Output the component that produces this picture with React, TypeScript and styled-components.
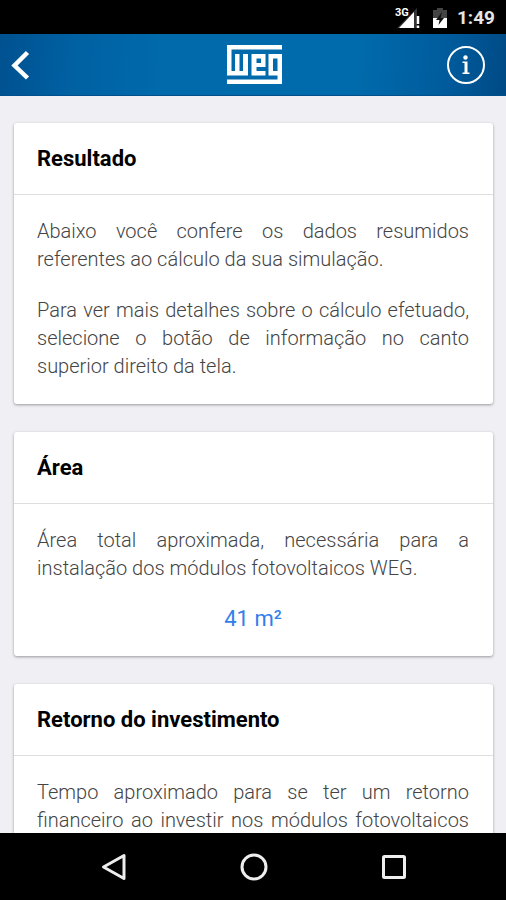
import React from "react";
import styled, { createGlobalStyle } from "styled-components";

const GlobalStyle = createGlobalStyle`
  *, *::before, *::after { box-sizing: border-box; }
  body { margin: 0; background: #efeff4; font-family: Roboto, "Liberation Sans", sans-serif; }
`;

const Screen = styled.div`
  display: flex;
  flex-direction: column;
  height: 100vh;
  overflow: hidden;
`;

const StatusBar = styled.div`
  flex: none;
  display: flex;
  align-items: center;
  justify-content: flex-end;
  height: 34px;
  padding: 2px 11px 0;
  background: #000;
  color: #fff;
`;

const Clock = styled.time`
  margin-left: 9px;
  font-size: 19px;
  font-weight: 700;
  line-height: 24px;
  color: #e6e6e6;
`;

const SignalIcon = styled.svg`
  margin-right: 10px;
`;

const AppBar = styled.header`
  flex: none;
  display: grid;
  grid-template-columns: 1fr auto 1fr;
  align-items: center;
  height: 62px;
  padding: 0 8px 0 10px;
  background: linear-gradient(95deg, #00518f 0%, #0060a2 14%, #006aab 32%, #006bac 70%, #005b9c 88%, #004a85 100%);
  border-bottom: 1px solid #004f8d;
`;

const BarButton = styled.button<{ $end?: boolean }>`
  justify-self: ${({ $end }) => ($end ? "end" : "start")};
  display: flex;
  padding: ${({ $end }) => ($end ? "0 12px" : "0 12px 0 0")};
  border: 0;
  background: none;
  color: #fff;
`;

const Content = styled.main`
  flex: 1;
  min-height: 0;
  display: flex;
  flex-direction: column;
  gap: 28px;
  padding: 27px 13px 27px 14px;
  overflow: auto;
  scrollbar-width: none;
`;

const Card = styled.section`
  flex: none;
  background: #fff;
  border-radius: 3px;
  box-shadow: 0 1px 3px rgba(0, 0, 0, 0.36);
`;

const CardTitle = styled.h2`
  margin: 0;
  padding: 22px 23px 21px;
  border-bottom: 1px solid #dedede;
  font-size: 22px;
  font-weight: 700;
  line-height: 28px;
  color: #000;
`;

const CardBody = styled.div`
  display: flex;
  flex-direction: column;
  gap: 23px;
  padding: 22px 24px 24px 23px;
`;

const Paragraph = styled.p`
  margin: 0;
  font-size: 20px;
  font-weight: 300;
  line-height: 28px;
  text-align: justify;
  color: #444;
`;

const Value = styled.strong`
  font-size: 22px;
  font-weight: 400;
  line-height: 27px;
  text-align: center;
  color: #327eeb;
`;

const NavBar = styled.nav`
  flex: none;
  display: flex;
  justify-content: center;
  gap: 100px;
  height: 67px;
  padding-left: 2px;
  background: #000;
`;

const NavButton = styled.button`
  display: flex;
  align-items: center;
  justify-content: center;
  width: 40px;
  padding: 0;
  border: 0;
  background: none;
  color: #eee;
`;

const cards = [
  {
    title: "Resultado",
    text: [
      "Abaixo você confere os dados resumidos referentes ao cálculo da sua simulação.",
      "Para ver mais detalhes sobre o cálculo efetuado, selecione o botão de informação no canto superior direito da tela.",
    ],
  },
  {
    title: "Área",
    text: ["Área total aproximada, necessária para a instalação dos módulos fotovoltaicos WEG."],
    value: "41 m²",
  },
  {
    title: "Retorno do investimento",
    text: ["Tempo aproximado para se ter um retorno financeiro ao investir nos módulos fotovoltaicos WEG."],
  },
];

export default function App() {
  return (
    <Screen>
      <GlobalStyle />
      <StatusBar>
        <SignalIcon width="28" height="22" viewBox="0 0 28 22" aria-label="3G">
          <path d="M23 1v20H3z" fill="#333" />
          <path d="M20 5v16H5z" fill="#fff" />
          <path d="M24 9v8M24 18.500v2.500" stroke="#fff" strokeWidth="2.500" />
          <text x="1" y="9" fontSize="11" fontWeight="700" fill="#fff">3G</text>
        </SignalIcon>
        <svg width="16" height="22" viewBox="0 0 16 22" aria-hidden="true">
          <path d="M1 3h4V1h6v2h4v18H1z" fill="#444" />
          <path d="M1 11h14v10H1z" fill="#fff" />
          <path d="M10 5L4 13h3.500L6.500 18 12 11H8.500z" fill="#111" />
        </svg>
        <Clock>1:49</Clock>
      </StatusBar>
      <AppBar>
        <BarButton aria-label="Voltar">
          <svg width="20" height="30" viewBox="0 0 20 30" fill="none" stroke="currentColor" strokeWidth="4.500">
            <path d="M17.500 2.500L4.500 15.500 17.500 28" />
          </svg>
        </BarButton>
        <svg width="55" height="39" viewBox="0 0 55 39" fill="#fff" role="img" aria-label="WEG">
          <path d="M0 0H55V4.500H4.500V26H8V9H12.500V26H16V9H21V30.500H0z" />
          <path fillRule="evenodd" d="M24.500 9H38.500V22H29.500V26H38.500V30.500H24.500zM29.500 13.500V18H34V13.500z" />
          <path fillRule="evenodd" d="M41.500 9H55V39H0V34.500H50.500V30.500H41.500zM46 13.500V26H50.500V13.500z" />
        </svg>
        <BarButton $end aria-label="Informações">
          <svg width="40" height="40" viewBox="0 0 40 40" fill="none">
            <circle cx="20" cy="20" r="18" stroke="currentColor" strokeWidth="2" />
            <circle cx="19.500" cy="12.500" r="2.200" fill="currentColor" />
            <path d="M16.500 16.500h5v11h2V29h-7v-1.500h2V18h-2z" fill="currentColor" />
          </svg>
        </BarButton>
      </AppBar>
      <Content>
        {cards.map((card) => (
          <Card key={card.title}>
            <CardTitle>{card.title}</CardTitle>
            <CardBody>
              {card.text.map((line) => (
                <Paragraph key={line}>{line}</Paragraph>
              ))}
              {card.value && <Value>{card.value}</Value>}
            </CardBody>
          </Card>
        ))}
      </Content>
      <NavBar>
        <NavButton aria-label="Voltar">
          <svg width="28" height="28" viewBox="0 0 28 28" fill="none" stroke="currentColor" strokeWidth="3" strokeLinejoin="round">
            <path d="M24 2.500V25.500L3.500 14z" />
          </svg>
        </NavButton>
        <NavButton aria-label="Início">
          <svg width="28" height="28" viewBox="0 0 28 28" fill="none" stroke="currentColor" strokeWidth="3">
            <circle cx="14" cy="14" r="12" />
          </svg>
        </NavButton>
        <NavButton aria-label="Recentes">
          <svg width="28" height="28" viewBox="0 0 28 28" fill="none" stroke="currentColor" strokeWidth="3">
            <rect x="3.500" y="3.500" width="21" height="21" rx="1" />
          </svg>
        </NavButton>
      </NavBar>
    </Screen>
  );
}
